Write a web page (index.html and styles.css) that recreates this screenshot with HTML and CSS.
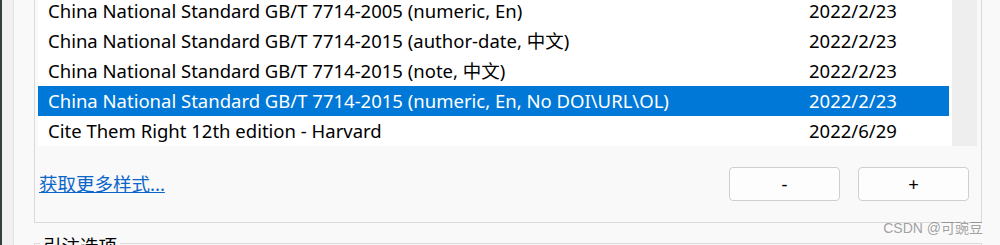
FILE: index.html
```html
<!DOCTYPE html>
<html lang="zh-CN">
<head>
  <meta charset="UTF-8">
  <title>引文样式</title>
  <link rel="stylesheet" href="styles.css">
</head>
<body>
  <div class="edge"></div>
  <div class="sidebar"></div>

  <div class="main">
    <!-- Style list panel -->
    <div class="panel">
      <div class="list-wrap">
        <ul class="style-list">
          <li><span>China National Standard GB/T 7714-2005 (numeric, En)</span><span>2022/2/23</span></li>
          <li><span>China National Standard GB/T 7714-2015 (author-date, 中文)</span><span>2022/2/23</span></li>
          <li><span>China National Standard GB/T 7714-2015 (note, 中文)</span><span>2022/2/23</span></li>
          <li class="selected"><span>China National Standard GB/T 7714-2015 (numeric, En, No DOI\URL\OL)</span><span>2022/2/23</span></li>
          <li><span>Cite Them Right 12th edition - Harvard</span><span>2022/6/29</span></li>
        </ul>
        <div class="scrollbar"></div>
      </div>

      <div class="panel-footer">
        <a href="#" class="more-link">获取更多样式...</a>
        <div class="buttons">
          <button class="btn">-</button>
          <button class="btn">+</button>
        </div>
      </div>
    </div>

    <!-- Citation options group -->
    <div class="group">
      <div class="group-title">引注选项</div>
    </div>
  </div>

  <div class="watermark">CSDN @可豌豆</div>
</body>
</html>
```

FILE: styles.css
```css
body {
  margin: 0;
  height: 245px;
  overflow: hidden;
  display: flex;
  background-color: #f9f9f9;
  font-family: "Noto Sans", "Noto Sans CJK SC", sans-serif;
  font-size: 18.5px;
  color: #000;
  position: relative;
}

.edge {
  width: 2px;
  background-color: #33403a;
}

.sidebar {
  width: 11px;
  background-color: #f0f0f0;
  border-right: 1px solid #e2e2e2;
}

.main {
  flex: 1;
  padding: 0 18px 0 20px;
}

.panel {
  margin-top: -4px;
  border: 1px solid #dadada;
  border-top: none;
  padding: 0 4px 21px 3px;
}

.list-wrap {
  display: flex;
}

.style-list {
  flex: 1;
  list-style: none;
  margin: 0;
  padding: 0;
  background-color: #fff;
}

.style-list li {
  display: grid;
  grid-template-columns: 761px 1fr;
  height: 30px;
  line-height: 30px;
  padding-left: 10px;
  margin-right: 3px;
  white-space: nowrap;
}

.style-list li.selected {
  background-color: #0078d7;
  color: #fff;
}

.scrollbar {
  width: 25px;
  background-color: #eeeeee;
}

.panel-footer {
  display: flex;
  align-items: center;
  justify-content: space-between;
  margin-top: 21px;
  padding-left: 1px;
  padding-right: 8px;
}

.more-link {
  color: #0a66c8;
  text-decoration: underline;
  line-height: 22px;
}

.buttons {
  display: flex;
  gap: 18px;
}

.btn {
  width: 111px;
  height: 34px;
  background-color: #fdfdfd;
  border: 1px solid #cfcfcf;
  border-radius: 4px;
  font-family: inherit;
  font-size: 18.5px;
  color: #000;
  line-height: 1;
  padding: 0;
}

.group {
  margin-top: 20px;
  height: 40px;
  border: 1px solid #dadada;
  border-bottom: none;
  padding-left: 5px;
}

.group-title {
  width: fit-content;
  margin-top: -8px;
  padding: 0 3px;
  line-height: 20px;
  background-color: #f9f9f9;
}

.watermark {
  position: absolute;
  top: 220px;
  right: 17px;
  font-family: "Liberation Sans", "Noto Sans CJK SC", sans-serif;
  font-size: 14px;
  line-height: 16px;
  color: rgba(110, 110, 110, 0.65);
}
```
